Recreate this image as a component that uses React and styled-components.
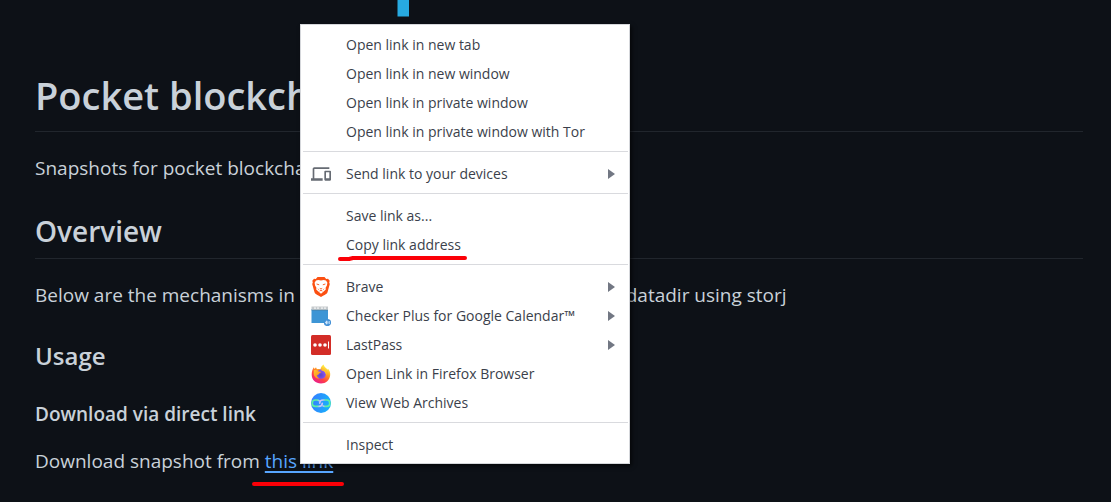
import React from "react";
import styled, { createGlobalStyle, css } from "styled-components";
import { MdDevices } from "react-icons/md";

const GlobalStyle = createGlobalStyle`
  * { box-sizing: border-box; }
  body {
    margin: 0;
    background: #0d1117;
    color: #c9d1d9;
    font-family: "Open Sans", "Noto Sans", sans-serif;
  }
`;

const Page = styled.div`
  position: relative;
  min-height: 100vh;
  overflow: hidden;
`;

const Banner = styled.div`
  display: flex;
  height: 69px;
  padding-left: 397px;
`;

const Article = styled.main`
  padding: 0 28px 24px 35px;
`;

const heading = css`
  font-weight: 600;
  white-space: nowrap;
`;

const Title = styled.h1`
  ${heading}
  margin: 0 0 21px;
  padding-bottom: 10px;
  border-bottom: 1px solid #21262d;
  font-size: 38px;
  line-height: 52px;
`;

const Section = styled.h2`
  ${heading}
  margin: 29px 0 21px;
  padding-bottom: 8px;
  border-bottom: 1px solid #21262d;
  font-size: 28px;
  line-height: 38px;
`;

const SubSection = styled.h3`
  ${heading}
  margin: 30px 0;
  font-size: 24px;
  line-height: 32px;
`;

const Topic = styled.h4`
  ${heading}
  margin: 0 0 19px;
  font-size: 19px;
  line-height: 25px;
`;

const Text = styled.p`
  margin: 0;
  font-size: 19px;
  line-height: 30px;
  white-space: nowrap;
`;

const Link = styled.a`
  position: relative;
  color: #58a6ff;
  text-decoration: underline;
  text-decoration-thickness: 2px;
  text-underline-offset: 3px;
`;

const Menu = styled.div`
  position: absolute;
  top: 24px;
  left: 300px;
  width: 330px;
  padding: 5px 1px 4px 2px;
  background: #fff;
  border: 1px solid #d5d7db;
  box-shadow: 2px 2px 4px rgba(0, 0, 0, 0.6);
`;

const Group = styled.div`
  & + & {
    margin-top: 5px;
    padding-top: 7px;
    border-top: 1px solid #d9dade;
  }
`;

const Item = styled.button`
  position: relative;
  display: grid;
  grid-template-columns: 20px 1fr 7px;
  column-gap: 15px;
  align-items: center;
  width: 100%;
  height: 29px;
  padding: 0 13px 0 8px;
  border: 0;
  background: none;
  color: #3b3f4b;
  font: 14px/20px "Open Sans", "Noto Sans", sans-serif;
  text-align: left;
  white-space: nowrap;
`;

const IconSlot = styled.span`
  display: flex;
  align-items: center;
  justify-content: center;
  height: 20px;
`;

const Marker = styled.svg`
  position: absolute;
  left: ${(p) => p.$left};
  top: ${(p) => p.$top};
  overflow: visible;
  fill: none;
  stroke: #fb0007;
  stroke-width: 4;
  stroke-linecap: round;
  stroke-linejoin: round;
  pointer-events: none;
`;

const Arrow = () => (
  <svg width="7" height="10" viewBox="0 0 7 10" aria-hidden="true">
    <path d="M0 0L7 5L0 10Z" fill="#727783" />
  </svg>
);

const BraveIcon = () => (
  <svg width="20" height="20" viewBox="0 0 20 20" aria-hidden="true">
    <path d="M6.5 0H13.5L15.2 1.9L17 1.7L18.7 3.8L18.2 5.4L18.8 7L16.5 15.2C16 16.5 15 17.3 10 20C5 17.3 4 16.5 3.5 15.2L1.2 7L1.8 5.4L1.3 3.8L3 1.7L4.8 1.9Z" fill="#fb5012" />
    <path d="M7.3 3L10 3.5L12.7 3L15 3.6L16.4 5.8L15.9 8.4L14.6 10.8L14.8 12.6L12.6 14.6L10 16.8L7.4 14.6L5.2 12.6L5.4 10.8L4.1 8.4L3.6 5.8L5 3.6Z" fill="#fff" />
    <path d="M5.6 7L8.2 7.8M14.4 7L11.8 7.8M8.8 11.4L10 12L11.2 11.4M7 11.8L7.6 12.6M13 11.8L12.4 12.6M8.6 14L10 13.4L11.4 14" fill="none" stroke="#fb5012" strokeWidth="0.9" />
  </svg>
);

const CalendarIcon = () => (
  <svg width="20" height="20" viewBox="0 0 20 20" aria-hidden="true">
    <rect x="0.5" y="3" width="16.5" height="14" fill="#3d95d5" />
    <rect x="0.5" y="0.5" width="16.5" height="3.5" fill="#c5c9cc" />
    <path d="M4 1.2v1.8M7 1.2v1.8M11 1.2v1.8M14 1.2v1.8" stroke="#f4f5f6" strokeWidth="1.4" />
    <path d="M0.5 4.2H17" stroke="#4a7d9f" strokeWidth="0.6" />
    <circle cx="16.5" cy="16.5" r="3.6" fill="#4390d6" />
    <path d="M14.2 16.5L16 14.8V18.2ZM17 15.5v2M18.3 15v3" stroke="#d4eafb" strokeWidth="0.8" fill="#d4eafb" />
  </svg>
);

const LastPassIcon = () => (
  <svg width="20" height="20" viewBox="0 0 20 20" aria-hidden="true">
    <rect width="20" height="20" rx="1.5" fill="#d32d27" />
    <circle cx="4" cy="10" r="1.8" fill="#fff" />
    <circle cx="9" cy="10" r="1.8" fill="#fff" />
    <circle cx="14" cy="10" r="1.8" fill="#fff" />
    <path d="M17.5 6.5V13.5" stroke="#fff" strokeWidth="1" />
  </svg>
);

const FirefoxIcon = () => (
  <svg width="20" height="20" viewBox="0 0 20 20" aria-hidden="true">
    <defs>
      <linearGradient id="fxBody" x1="0.8" y1="0" x2="0.2" y2="1">
        <stop offset="0.1" stopColor="#fff044" />
        <stop offset="0.4" stopColor="#ff9a20" />
        <stop offset="0.68" stopColor="#ff3f45" />
        <stop offset="1" stopColor="#e5169a" />
      </linearGradient>
      <radialGradient id="fxGlobe" cx="0.45" cy="0.6" r="0.6">
        <stop offset="0" stopColor="#5b45c9" />
        <stop offset="1" stopColor="#9056f5" />
      </radialGradient>
      <linearGradient id="fxTail" x1="0" y1="0" x2="1" y2="1">
        <stop offset="0" stopColor="#ffc52b" />
        <stop offset="1" stopColor="#ff8119" />
      </linearGradient>
    </defs>
    <path d="M12.5 0.5C13.2 3 15.5 4 16.5 5.8L17 4.8C18.8 6.6 19.4 9 19.2 11C18.8 16 14.8 19.5 10 19.5C4.6 19.5 0.7 15.5 0.7 10.7C0.7 8 1.3 5.6 2.8 3.3L3.5 5.1L5 3.2L5.9 5.3C7.2 4.8 8.5 4.9 9.5 5.3C9.9 3.3 10.9 1.7 12.5 0.5Z" fill="url(#fxBody)" />
    <circle cx="10.2" cy="10.2" r="4.6" fill="url(#fxGlobe)" />
    <path d="M3 6.2C5 5.7 6.6 6.5 7.5 7.5L10 7.8C9.8 9 8.6 9.2 8.1 9.6C7.8 10.9 6.4 10.8 5.8 11.6C6.2 13 7.2 13.8 8.4 14.6C5.5 15.2 3 13 2.7 10Z" fill="url(#fxTail)" />
    <path d="M11 4C14.9 5.7 16.2 8 15.3 11.5C15 9.2 13.5 6.7 10.3 6.4Z" fill="#ffc32a" />
  </svg>
);

const ArchivesIcon = () => (
  <svg width="20" height="20" viewBox="0 0 20 20" aria-hidden="true">
    <defs>
      <linearGradient id="archiveDisc" x1="0" y1="0.2" x2="1" y2="0.4">
        <stop offset="0" stopColor="#387cff" />
        <stop offset="1" stopColor="#16b2fb" />
      </linearGradient>
      <linearGradient id="archiveLeft" gradientUnits="userSpaceOnUse" x1="1" y1="0" x2="12" y2="0">
        <stop offset="0.45" stopColor="#5ff0a0" />
        <stop offset="0.7" stopColor="#c4c2fa" />
      </linearGradient>
      <linearGradient id="archiveRight" gradientUnits="userSpaceOnUse" x1="8" y1="0" x2="19" y2="0">
        <stop offset="0.35" stopColor="#c4c2fa" />
        <stop offset="0.6" stopColor="#5ff0a0" />
      </linearGradient>
    </defs>
    <circle cx="10" cy="10" r="10" fill="url(#archiveDisc)" />
    <g fill="none" strokeWidth="1.7" strokeLinecap="round">
      <path d="M8 7.6C7.4 7.1 6.8 7 6 7H4.3C2.4 7 1.2 8.4 1.2 10.2C1.2 12 2.4 13.4 4.3 13.4H8C10 13.4 11.3 12.1 11.3 10.3" stroke="url(#archiveLeft)" />
      <path d="M12 12.8C12.6 13.3 13.2 13.4 14 13.4H15.7C17.6 13.4 18.8 12 18.8 10.2C18.8 8.4 17.6 7 15.7 7H12C10 7 8.7 8.3 8.7 10.1" stroke="url(#archiveRight)" />
    </g>
  </svg>
);

const groups = [
  [
    { label: "Open link in new tab" },
    { label: "Open link in new window" },
    { label: "Open link in private window" },
    { label: "Open link in private window with Tor" },
  ],
  [{ label: "Send link to your devices", icon: <MdDevices size={20} color="#666b73" />, submenu: true }],
  [{ label: "Save link as..." }, { label: "Copy link address", marked: true }],
  [
    { label: "Brave", icon: <BraveIcon />, submenu: true },
    { label: "Checker Plus for Google Calendar™", icon: <CalendarIcon />, submenu: true },
    { label: "LastPass", icon: <LastPassIcon />, submenu: true },
    { label: "Open Link in Firefox Browser", icon: <FirefoxIcon /> },
    { label: "View Web Archives", icon: <ArchivesIcon /> },
  ],
  [{ label: "Inspect" }],
];

export default function App() {
  return (
    <Page>
      <GlobalStyle />
      <Banner>
        <svg width="13" height="17" viewBox="0 0 13 17" aria-hidden="true">
          <path d="M0.5 0H12V16.5H0.5Z" fill="#27aae1" />
        </svg>
      </Banner>
      <Article>
        <Title>Pocket blockchain</Title>
        <Text>Snapshots for pocket blockchain</Text>
        <Section>Overview</Section>
        <Text>Below are the mechanisms in order to download the entire pocket datadir using storj</Text>
        <SubSection>Usage</SubSection>
        <Topic>Download via direct link</Topic>
        <Text>
          Download snapshot from{" "}
          <Link href="#snapshot">
            this link
            <Marker $left="-11px" $top="34px" width="90" height="4" aria-hidden="true">
              <path d="M0 2H88" />
            </Marker>
          </Link>
        </Text>
      </Article>
      <Menu role="menu">
        {groups.map((items, i) => (
          <Group key={i} role="group">
            {items.map((item) => (
              <Item key={item.label} type="button" role="menuitem">
                <IconSlot>{item.icon}</IconSlot>
                <span>{item.label}</span>
                {item.submenu && <Arrow />}
                {item.marked && (
                  <Marker $left="36px" $top="25px" width="128" height="6" aria-hidden="true">
                    <path d="M1 4H10L14 3H126" />
                  </Marker>
                )}
              </Item>
            ))}
          </Group>
        ))}
      </Menu>
    </Page>
  );
}
